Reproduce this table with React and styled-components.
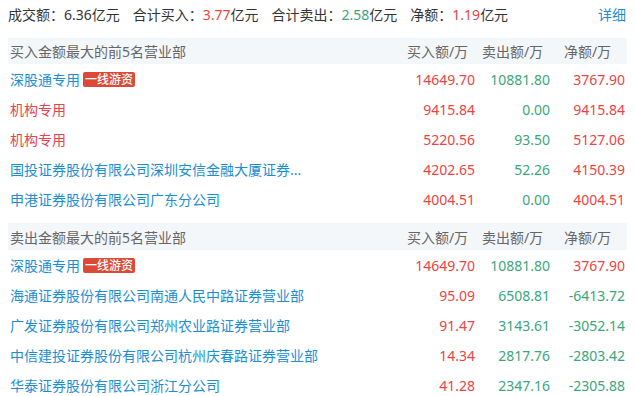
import React from "react";
import styled, { createGlobalStyle } from "styled-components";

const Global = createGlobalStyle`
  html, body { margin: 0; padding: 0; background: #fff; }
  body { font-family: "Noto Sans", "Noto Sans CJK SC", sans-serif; font-size: 14px; color: #333; }
`;

const RED = "#ec4343";
const GREEN = "#3aa67c";
const BLUE = "#1b8ed3";

const Page = styled.div`
  padding: 0 8px;
  width: 619px;
`;

const Summary = styled.div`
  display: flex;
  align-items: center;
  height: 28px;
  font-size: 14px;
  color: #333;
`;

const Stat = styled.span`
  margin-right: 13px;
  white-space: nowrap;
`;

const Val = styled.span`
  color: ${(p) => p.$c};
`;

const Detail = styled.a`
  margin-left: auto;
  color: ${BLUE};
  text-decoration: none;
  margin-right: 1px;
`;

const Section = styled.div`
  margin-top: ${(p) => p.$top}px;
`;

const Grid = styled.div`
  display: grid;
  grid-template-columns: 1fr 75px 75px 75px;
  padding-right: 2px;
  padding-left: 2px;
  align-items: center;
`;

const Head = styled(Grid)`
  height: ${(p) => p.$h}px;
  background: #f4f7fa;
  color: #666;
`;

const HeadCell = styled.div`
  text-align: ${(p) => (p.$left ? "left" : "center")};
  white-space: nowrap;
`;

const Row = styled(Grid)`
  height: 30px;
`;

const Name = styled.div`
  color: ${(p) => p.$c};
  white-space: nowrap;
  display: flex;
  align-items: center;
`;

const Tag = styled.span`
  display: inline-block;
  margin-left: 3px;
  background: #dc4a37;
  color: #fff;
  font-size: 12px;
  line-height: 15px;
  height: 15px;
  padding: 0 2px;
  border-radius: 2px;
  font-weight: 500;
`;

const Num = styled.div`
  text-align: right;
  color: ${(p) => p.$c};
  white-space: nowrap;
`;

const colorOf = (s) => (s.startsWith("-") ? GREEN : RED);

const buyRows = [
  { name: "深股通专用", tag: true, nc: BLUE, b: "14649.70", s: "10881.80", n: "3767.90" },
  { name: "机构专用", nc: "#e8434f", b: "9415.84", s: "0.00", n: "9415.84" },
  { name: "机构专用", nc: "#e8434f", b: "5220.56", s: "93.50", n: "5127.06" },
  { name: "国投证券股份有限公司深圳安信金融大厦证券...", nc: BLUE, b: "4202.65", s: "52.26", n: "4150.39" },
  { name: "申港证券股份有限公司广东分公司", nc: BLUE, b: "4004.51", s: "0.00", n: "4004.51" },
];

const sellRows = [
  { name: "深股通专用", tag: true, nc: BLUE, b: "14649.70", s: "10881.80", n: "3767.90" },
  { name: "海通证券股份有限公司南通人民中路证券营业部", nc: BLUE, b: "95.09", s: "6508.81", n: "-6413.72" },
  { name: "广发证券股份有限公司郑州农业路证券营业部", nc: BLUE, b: "91.47", s: "3143.61", n: "-3052.14" },
  { name: "中信建投证券股份有限公司杭州庆春路证券营业部", nc: BLUE, b: "14.34", s: "2817.76", n: "-2803.42" },
  { name: "华泰证券股份有限公司浙江分公司", nc: BLUE, b: "41.28", s: "2347.16", n: "-2305.88" },
];

function Table({ title, rows, top, h }) {
  return (
    <Section $top={top}>
      <Head $h={h}>
        <HeadCell $left>{title}</HeadCell>
        <HeadCell>买入额/万</HeadCell>
        <HeadCell>卖出额/万</HeadCell>
        <HeadCell>净额/万</HeadCell>
      </Head>
      {rows.map((r, i) => (
        <Row key={i}>
          <Name $c={r.nc}>
            {r.name}
            {r.tag && <Tag>一线游资</Tag>}
          </Name>
          <Num $c={RED}>{r.b}</Num>
          <Num $c={GREEN}>{r.s}</Num>
          <Num $c={colorOf(r.n)}>{r.n}</Num>
        </Row>
      ))}
    </Section>
  );
}

export default function App() {
  return (
    <>
      <Global />
      <Page>
        <Summary>
          <Stat>成交额：6.36亿元</Stat>
          <Stat>合计买入：<Val $c={RED}>3.77</Val>亿元</Stat>
          <Stat>合计卖出：<Val $c={GREEN}>2.58</Val>亿元</Stat>
          <Stat>净额：<Val $c={RED}>1.19</Val>亿元</Stat>
          <Detail href="#">详细</Detail>
        </Summary>
        <Table title="买入金额最大的前5名营业部" rows={buyRows} top={10} h={26} />
        <Table title="卖出金额最大的前5名营业部" rows={sellRows} top={9} h={27} />
      </Page>
    </>
  );
}
